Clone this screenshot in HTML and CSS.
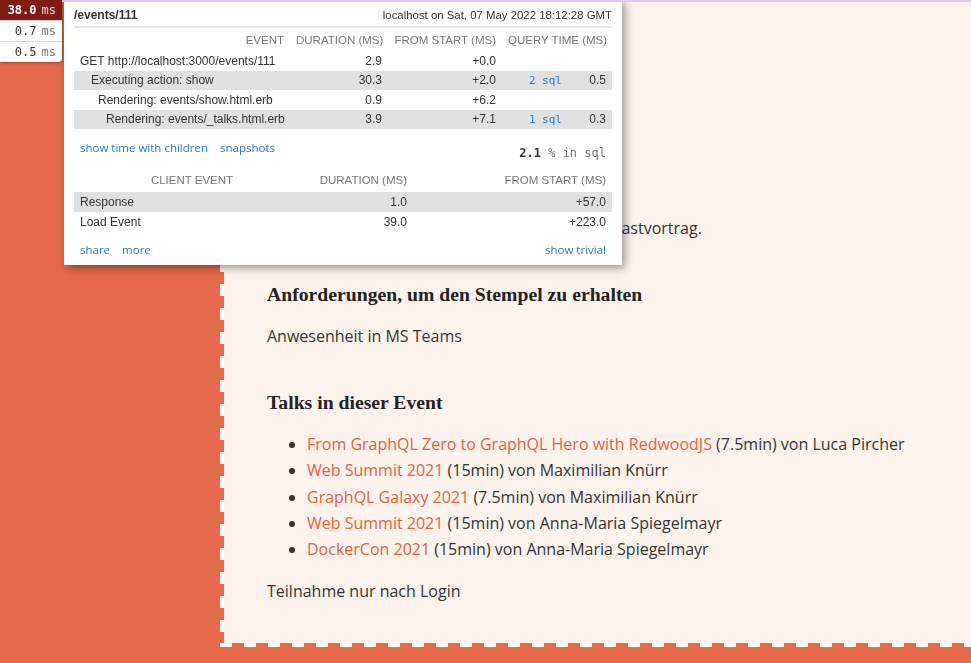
FILE: index.html
```html
<!DOCTYPE html>
<html lang="de">
<head>
<meta charset="utf-8">
<title>Event 111</title>
<link rel="stylesheet" href="styles.css">
</head>
<body>
<div class="topbar"></div>
<main class="page">
  <section class="card">
    <p class="lead">Ein Online-Meetup der Community mit einem Gastvortrag.</p>
    <h3>Anforderungen, um den Stempel zu erhalten</h3>
    <p>Anwesenheit in MS Teams</p>
    <h3>Talks in dieser Event</h3>
    <ul class="talks">
      <li><a class="talk" href="#">From GraphQL Zero to GraphQL Hero with RedwoodJS</a> (7.5min) von Luca Pircher</li>
      <li><a class="talk" href="#">Web Summit 2021</a> (15min) von Maximilian Knürr</li>
      <li><a class="talk" href="#">GraphQL Galaxy 2021</a> (7.5min) von Maximilian Knürr</li>
      <li><a class="talk" href="#">Web Summit 2021</a> (15min) von Anna-Maria Spiegelmayr</li>
      <li><a class="talk" href="#">DockerCon 2021</a> (15min) von Anna-Maria Spiegelmayr</li>
    </ul>
    <p class="last">Teilnahme nur nach Login</p>
  </section>
</main>

<div class="profiler">
  <div class="badges">
    <div class="badge current">38.0<span class="unit">ms</span></div>
    <div class="badge">0.7<span class="unit">ms</span></div>
    <div class="badge last">0.5<span class="unit">ms</span></div>
  </div>
  <div class="popup">
    <div class="popup-head">
      <span class="title">/events/111</span>
      <span class="meta">localhost on Sat, 07 May 2022 18:12:28 GMT</span>
    </div>
    <table class="timings">
      <colgroup><col class="c1"><col class="c2"><col class="c3"><col class="c4"><col class="c5"></colgroup>
      <thead>
        <tr><th>Event</th><th>Duration (ms)</th><th>From start (ms)</th><th colspan="2">Query time (ms)</th></tr>
      </thead>
      <tbody>
        <tr><td class="name d0">GET http://localhost:3000/events/111</td><td>2.9</td><td>+0.0</td><td></td><td></td></tr>
        <tr class="alt"><td class="name d1">Executing action: show</td><td>30.3</td><td>+2.0</td><td><a class="sql" href="#">2 sql</a></td><td>0.5</td></tr>
        <tr><td class="name d2">Rendering: events/show.html.erb</td><td>0.9</td><td>+6.2</td><td></td><td></td></tr>
        <tr class="alt"><td class="name d3">Rendering: events/_talks.html.erb</td><td>3.9</td><td>+7.1</td><td><a class="sql" href="#">1 sql</a></td><td>0.3</td></tr>
      </tbody>
    </table>
    <div class="links">
      <div class="link-group"><a href="#">show time with children</a><a href="#">snapshots</a></div>
      <div class="pct"><b>2.1</b> % in sql</div>
    </div>
    <table class="client">
      <colgroup><col class="k1"><col class="k2"><col class="k3"></colgroup>
      <thead>
        <tr><th class="center">Client event</th><th>Duration (ms)</th><th>From start (ms)</th></tr>
      </thead>
      <tbody>
        <tr class="alt"><td class="name d0">Response</td><td>1.0</td><td>+57.0</td></tr>
        <tr><td class="name d0">Load Event</td><td>39.0</td><td>+223.0</td></tr>
      </tbody>
    </table>
    <div class="popup-foot">
      <div class="link-group"><a href="#">share</a><a href="#">more</a></div>
      <a href="#">show trivial</a>
    </div>
  </div>
</div>
</body>
</html>
```

FILE: styles.css
```css
html, body {
  margin: 0;
}
body {
  background: #e6694a;
  font-family: "Open Sans", sans-serif;
  color: #333;
}

.topbar {
  position: fixed;
  top: 0;
  left: 62px;
  right: 0;
  height: 2px;
  background: #e3c9f1;
  z-index: 20;
}

/* ---------- page card ---------- */
.page {
  padding: 0 0 16px 220px;
  overflow: hidden;
}
.card {
  margin: -4px -4px 0 0;
  border: 4px solid transparent;
  background:
    repeating-linear-gradient(to bottom, #fdf8f5 0 12px, transparent 12px 24px) left top / 4px 100% no-repeat border-box,
    repeating-linear-gradient(to right, #fdf8f5 0 12px, transparent 12px 24px) left bottom / 100% 4px no-repeat border-box,
    #fcf3ed padding-box;
  padding: 215px 40px 39px 43px;
}
.card p {
  margin: 16px 0;
  font-size: 16px;
  line-height: 26px;
}
.card p.lead {
  margin-top: 0;
}
.card p.last {
  margin-bottom: 0;
}
.card h3 {
  font-family: "Liberation Serif", "Times New Roman", serif;
  font-size: 19.7px;
  line-height: 22px;
  font-weight: bold;
  color: #222;
  margin: 42px 0 18px;
}
.talks {
  margin: 18px 0 16px;
  padding-left: 40px;
}
.talks li {
  font-size: 16px;
  line-height: 26.25px;
}
.talk {
  color: #e8603e;
  text-decoration: none;
}

/* ---------- profiler ---------- */
.profiler {
  position: fixed;
  top: 0;
  left: 0;
  display: flex;
  align-items: flex-start;
  gap: 2px;
  z-index: 10;
  font-family: "Liberation Sans", Arial, sans-serif;
}
.badges {
  width: 62px;
  background: #fff;
  border-bottom-right-radius: 4px;
  box-shadow: 1px 1px 3px rgba(0, 0, 0, 0.35);
}
.badge {
  height: 20px;
  border-bottom: 1px solid #d6d6d6;
  font-family: "DejaVu Sans Mono", monospace;
  font-size: 12px;
  line-height: 20px;
  text-align: right;
  padding-right: 6px;
  color: #333;
}
.badge .unit {
  color: #777;
  margin-left: 5px;
}
.badge.current {
  background: #7e1c14;
  color: #fff;
  font-weight: bold;
}
.badge.current .unit {
  color: #eed6d2;
  font-weight: normal;
}
.badge.last {
  border-bottom: none;
  border-bottom-right-radius: 4px;
}

.popup {
  width: 558px;
  height: 265px;
  box-sizing: border-box;
  padding: 0 10px;
  background: #fff;
  box-shadow: 3px 3px 8px rgba(0, 0, 0, 0.4);
  font-size: 12px;
  color: #333;
}
.popup a {
  color: #2a78d2;
  text-decoration: none;
}
.popup-head {
  display: flex;
  justify-content: space-between;
  align-items: baseline;
  height: 28px;
  padding-top: 8px;
  box-sizing: border-box;
  border-bottom: 2px solid #e6e6e6;
}
.popup-head .title {
  font-weight: bold;
  font-size: 12px;
}
.popup-head .meta {
  font-size: 11.4px;
}

.popup table {
  width: 100%;
  border-collapse: collapse;
  table-layout: fixed;
  font-size: 12px;
}
.popup th {
  font-weight: normal;
  font-size: 11.5px;
  color: #767676;
  text-transform: uppercase;
  text-align: right;
  padding: 0 6px;
  white-space: nowrap;
}
.popup td {
  padding: 0 6px;
  text-align: right;
  white-space: nowrap;
  height: 19.5px;
}
.popup td.name {
  text-align: left;
}
.popup tr.alt td {
  background: #e1e1e1;
}
.timings {
  margin-top: 1px;
}
.timings th {
  height: 22px;
}
.c1 { width: 216px; }
.c2 { width: 98px; }
.c3 { width: 114px; }
.c4 { width: 66px; }
.c5 { width: 44px; }
.d0 { padding-left: 6px !important; }
.d1 { padding-left: 17px !important; }
.d2 { padding-left: 24px !important; }
.d3 { padding-left: 32px !important; }
.sql {
  font-family: "DejaVu Sans Mono", monospace;
  font-size: 11px;
}

.links {
  display: flex;
  justify-content: space-between;
  align-items: flex-start;
  margin-top: 11px;
  padding: 0 6px;
  height: 21px;
}
.link-group {
  display: flex;
  gap: 12px;
}
.links a,
.popup-foot a {
  font-family: "Open Sans", sans-serif;
  font-size: 11.5px;
  line-height: 16px;
}
.pct {
  font-family: "DejaVu Sans Mono", monospace;
  font-size: 12px;
  color: #777;
  padding-top: 6px;
}
.pct b {
  color: #333;
}

.client {
  margin-top: 6px;
}
.client th {
  height: 25px;
}
.client td {
  height: 20px;
}
.client th.center {
  text-align: center;
}
.k1 { width: 236px; }
.k2 { width: 103px; }
.k3 { width: 199px; }

.popup-foot {
  display: flex;
  justify-content: space-between;
  margin-top: 10px;
  padding: 0 6px;
}
```
